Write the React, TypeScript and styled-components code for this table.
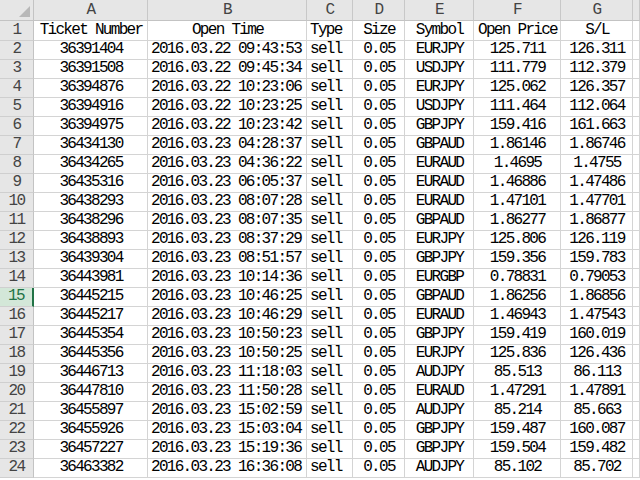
import React from "react";
import styled, { createGlobalStyle, css } from "styled-components";

const Global = createGlobalStyle`
  html, body { margin: 0; padding: 0; background: #ffffff; overflow: hidden; }
  body { width: 640px; height: 480px; }
`;

const rows: string[][] = [
  ["36391404", "2016.03.22 09:43:53", "sell", "0.05", "EURJPY", "125.711", "126.311"],
  ["36391508", "2016.03.22 09:45:34", "sell", "0.05", "USDJPY", "111.779", "112.379"],
  ["36394876", "2016.03.22 10:23:06", "sell", "0.05", "EURJPY", "125.062", "126.357"],
  ["36394916", "2016.03.22 10:23:25", "sell", "0.05", "USDJPY", "111.464", "112.064"],
  ["36394975", "2016.03.22 10:23:42", "sell", "0.05", "GBPJPY", "159.416", "161.663"],
  ["36434130", "2016.03.23 04:28:37", "sell", "0.05", "GBPAUD", "1.86146", "1.86746"],
  ["36434265", "2016.03.23 04:36:22", "sell", "0.05", "EURAUD", "1.4695", "1.4755"],
  ["36435316", "2016.03.23 06:05:37", "sell", "0.05", "EURAUD", "1.46886", "1.47486"],
  ["36438293", "2016.03.23 08:07:28", "sell", "0.05", "EURAUD", "1.47101", "1.47701"],
  ["36438296", "2016.03.23 08:07:35", "sell", "0.05", "GBPAUD", "1.86277", "1.86877"],
  ["36438893", "2016.03.23 08:37:29", "sell", "0.05", "EURJPY", "125.806", "126.119"],
  ["36439304", "2016.03.23 08:51:57", "sell", "0.05", "GBPJPY", "159.356", "159.783"],
  ["36443981", "2016.03.23 10:14:36", "sell", "0.05", "EURGBP", "0.78831", "0.79053"],
  ["36445215", "2016.03.23 10:46:25", "sell", "0.05", "GBPAUD", "1.86256", "1.86856"],
  ["36445217", "2016.03.23 10:46:29", "sell", "0.05", "EURAUD", "1.46943", "1.47543"],
  ["36445354", "2016.03.23 10:50:23", "sell", "0.05", "GBPJPY", "159.419", "160.019"],
  ["36445356", "2016.03.23 10:50:25", "sell", "0.05", "EURJPY", "125.836", "126.436"],
  ["36446713", "2016.03.23 11:18:03", "sell", "0.05", "AUDJPY", "85.513", "86.113"],
  ["36447810", "2016.03.23 11:50:28", "sell", "0.05", "EURAUD", "1.47291", "1.47891"],
  ["36455897", "2016.03.23 15:02:59", "sell", "0.05", "AUDJPY", "85.214", "85.663"],
  ["36455926", "2016.03.23 15:03:04", "sell", "0.05", "GBPJPY", "159.487", "160.087"],
  ["36457227", "2016.03.23 15:19:36", "sell", "0.05", "GBPJPY", "159.504", "159.482"],
  ["36463382", "2016.03.23 16:36:08", "sell", "0.05", "AUDJPY", "85.102", "85.702"],
];

const headers = ["Ticket Number", "Open Time", "Type", "Size", "Symbol", "Open Price", "S/L"];
const letters = ["A", "B", "C", "D", "E", "F", "G", ""];
type Align = "left" | "center" | "right";
const dataAlign: Align[] = ["center", "left", "left", "center", "center", "center", "center"];
const headAlign: Align[] = ["center", "center", "left", "center", "center", "center", "center"];

const SELECTED_ROW = 15;

const Sheet = styled.div`
  display: grid;
  grid-template-columns: 34px 114px 159px 46px 52px 69px 87px 72px 1fr;
  grid-template-rows: 21px 20px;
  grid-auto-rows: 19px;
  width: 640px;
  height: 480px;
  overflow: hidden;
  font-family: "Liberation Mono", "Noto Sans CJK SC", monospace;
  font-size: 16px;
  letter-spacing: -1.7px;
  color: #000;
`;

const Corner = styled.div`
  position: relative;
  background: #e6e6e6;
  border-right: 1px solid #c3c3c3;
  border-bottom: 1px solid #c3c3c3;
  box-sizing: border-box;
  &::after {
    content: "";
    position: absolute;
    right: 3px;
    bottom: 3px;
    width: 0;
    height: 0;
    border-left: 11px solid transparent;
    border-bottom: 11px solid #b8b8b8;
  }
`;

const ColHead = styled.div`
  display: flex;
  align-items: flex-end;
  justify-content: center;
  padding-bottom: 1px;
  background: #e6e6e6;
  color: #444;
  border-right: 1px solid #c8c8c8;
  border-bottom: 1px solid #c3c3c3;
  box-sizing: border-box;
  line-height: 17px;
  overflow: hidden;
`;

const RowHead = styled.div<{ $selected?: boolean }>`
  display: flex;
  align-items: flex-end;
  justify-content: center;
  padding-bottom: 1px;
  background: #e6e6e6;
  color: #444;
  border-right: 1px solid #c3c3c3;
  border-bottom: 1px solid #cfcfcf;
  box-sizing: border-box;
  line-height: 17px;
  ${(p) =>
    p.$selected &&
    css`
      background: #d3e7d8;
      color: #217346;
      border-right: 2px solid #217346;
    `}
`;

const Cell = styled.div<{ $align: Align }>`
  display: flex;
  align-items: flex-end;
  justify-content: ${(p) =>
    p.$align === "left" ? "flex-start" : p.$align === "right" ? "flex-end" : "center"};
  padding: 0 2px 1px 3px;
  border-right: 1px solid #d4d4d4;
  border-bottom: 1px solid #d4d4d4;
  box-sizing: border-box;
  white-space: nowrap;
  overflow: hidden;
  line-height: 17px;
  background: #fff;
`;

export default function App() {
  return (
    <>
      <Global />
      <Sheet>
        <Corner />
        {letters.map((l, i) => (
          <ColHead key={"h" + i}>{l}</ColHead>
        ))}
        <RowHead>1</RowHead>
        {headers.map((h, i) => (
          <Cell key={"t" + i} $align={headAlign[i]}>
            {h}
          </Cell>
        ))}
        <Cell $align="left" />
        {rows.map((r, ri) => {
          const n = ri + 2;
          return (
            <React.Fragment key={n}>
              <RowHead $selected={n === SELECTED_ROW}>{n}</RowHead>
              {r.map((v, ci) => (
                <Cell key={ci} $align={dataAlign[ci]}>
                  {v}
                </Cell>
              ))}
              <Cell $align="left" />
            </React.Fragment>
          );
        })}
      </Sheet>
    </>
  );
}
